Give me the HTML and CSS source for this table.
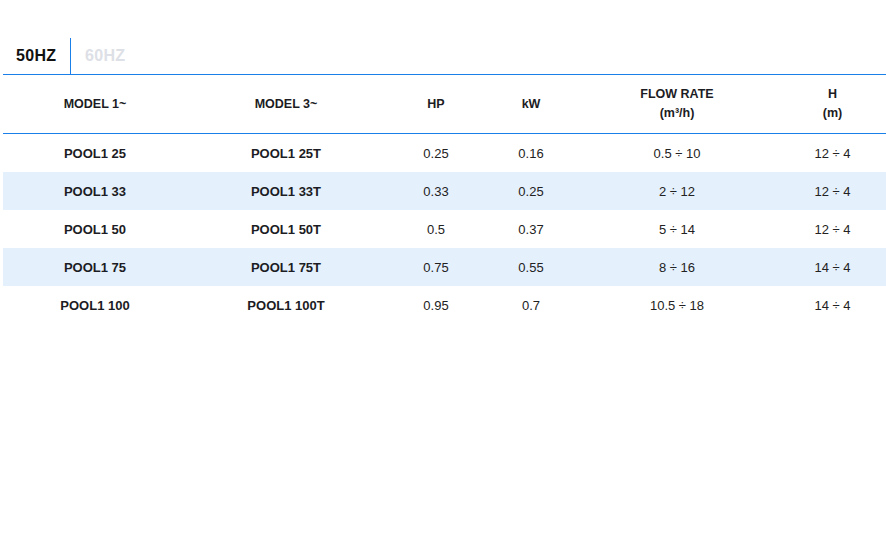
FILE: index.html
```html
<!DOCTYPE html>
<html>
<head>
<meta charset="utf-8">
<link rel="stylesheet" href="styles.css">
</head>
<body>
<div class="wrap">
  <div class="tabs">
    <div class="tab active">50HZ</div>
    <div class="tab">60HZ</div>
  </div>
  <table class="specs">
    <colgroup>
      <col class="c1"><col class="c2"><col class="c3"><col class="c4"><col class="c5"><col class="c6">
    </colgroup>
    <thead>
      <tr>
        <th>MODEL 1~</th>
        <th>MODEL 3~</th>
        <th>HP</th>
        <th>kW</th>
        <th>FLOW RATE<br>(m³/h)</th>
        <th>H<br>(m)</th>
      </tr>
    </thead>
    <tbody>
      <tr><td class="b">POOL1 25</td><td class="b">POOL1 25T</td><td>0.25</td><td>0.16</td><td>0.5 ÷ 10</td><td>12 ÷ 4</td></tr>
      <tr class="alt"><td class="b">POOL1 33</td><td class="b">POOL1 33T</td><td>0.33</td><td>0.25</td><td>2 ÷ 12</td><td>12 ÷ 4</td></tr>
      <tr><td class="b">POOL1 50</td><td class="b">POOL1 50T</td><td>0.5</td><td>0.37</td><td>5 ÷ 14</td><td>12 ÷ 4</td></tr>
      <tr class="alt"><td class="b">POOL1 75</td><td class="b">POOL1 75T</td><td>0.75</td><td>0.55</td><td>8 ÷ 16</td><td>14 ÷ 4</td></tr>
      <tr><td class="b">POOL1 100</td><td class="b">POOL1 100T</td><td>0.95</td><td>0.7</td><td>10.5 ÷ 18</td><td>14 ÷ 4</td></tr>
    </tbody>
  </table>
</div>
</body>
</html>
```
FILE: styles.css
```css
html, body {
  margin: 0;
  padding: 0;
  background: #fff;
}
body {
  font-family: "Liberation Sans", Arial, sans-serif;
  color: #1c1c24;
}
.wrap {
  padding: 38px 0 0 3px;
}
.tabs {
  display: flex;
  border-bottom: 1px solid #1a7fe8;
}
.tab {
  height: 36px;
  line-height: 36px;
  font-size: 16px;
  font-weight: bold;
  letter-spacing: 0.3px;
  color: #dde0e6;
  padding: 0 13px;
}
.tab.active {
  color: #111;
  border-right: 1px solid #1a7fe8;
  width: 41px;
  margin-right: 1px;
}
.specs {
  width: 883px;
  border-collapse: collapse;
  table-layout: fixed;
}
.c1 { width: 184px; }
.c2 { width: 198px; }
.c3 { width: 102px; }
.c4 { width: 88px; }
.c5 { width: 204px; }
.c6 { width: 107px; }
th {
  height: 58px;
  padding: 0;
  font-size: 12.5px;
  font-weight: bold;
  line-height: 19px;
  text-align: center;
  vertical-align: middle;
  color: #1c1c24;
  border-bottom: 1px solid #1a7fe8;
}
td {
  height: 38px;
  padding: 0;
  font-size: 13px;
  text-align: center;
  vertical-align: middle;
  color: #222;
}
td.b {
  font-weight: bold;
  color: #1c1c24;
}
tr.alt td {
  background: #e5f0fd;
}
```
